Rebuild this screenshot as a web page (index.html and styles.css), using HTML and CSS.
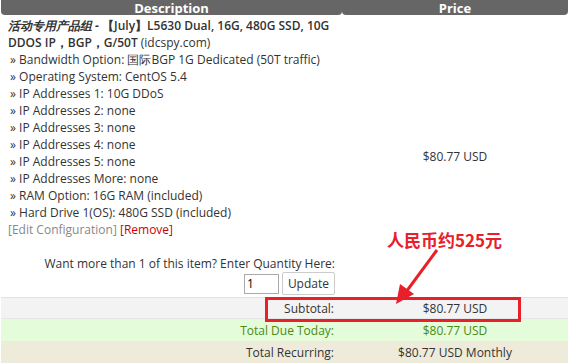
FILE: index.html
```html
<!DOCTYPE html>
<html lang="en">
<head>
  <meta charset="UTF-8" />
  <title>Shopping Cart</title>
  <link rel="stylesheet" href="styles.css">
</head>
<body>
  <table class="cart">
    <thead>
      <tr>
        <th class="col-desc">Description</th>
        <th class="col-price">Price</th>
      </tr>
    </thead>
    <tbody>
      <tr class="item">
        <td class="desc">
          <div class="title"><em>活动专用产品组 -</em> <strong>【July】L5630 Dual, 16G, 480G SSD, 10G DDOS IP，BGP，G/50T</strong> (idcspy.com)</div>
          <div class="opt">» Bandwidth Option: 国际BGP 1G Dedicated (50T traffic)</div>
          <div class="opt">» Operating System: CentOS 5.4</div>
          <div class="opt">» IP Addresses 1: 10G DDoS</div>
          <div class="opt">» IP Addresses 2: none</div>
          <div class="opt">» IP Addresses 3: none</div>
          <div class="opt">» IP Addresses 4: none</div>
          <div class="opt">» IP Addresses 5: none</div>
          <div class="opt">» IP Addresses More: none</div>
          <div class="opt">» RAM Option: 16G RAM (included)</div>
          <div class="opt">» Hard Drive 1(OS): 480G SSD (included)</div>
          <div class="links"><a href="#" class="edit">[Edit Configuration]</a> <a href="#" class="remove">[Remove]</a></div>
        </td>
        <td class="price" rowspan="2">$80.77 USD</td>
      </tr>
      <tr class="qty-row">
        <td class="qty">
          <div>Want more than 1 of this item? Enter Quantity Here:</div>
          <div class="qty-form"><input type="text" value="1" /><button>Update</button></div>
        </td>
      </tr>
      <tr class="subtotal">
        <td class="label">Subtotal:</td>
        <td class="amount">$80.77 USD</td>
      </tr>
      <tr class="due">
        <td class="label">Total Due Today:</td>
        <td class="amount">$80.77 USD</td>
      </tr>
      <tr class="recurring">
        <td class="label">Total Recurring:</td>
        <td class="amount">$80.77 USD Monthly</td>
      </tr>
    </tbody>
  </table>

  <!-- annotation drawn over the screenshot -->
  <div class="mark-box"></div>
  <div class="mark-text">人民币约525元</div>
  <svg class="mark-arrow" width="60" height="60" viewBox="0 0 60 60">
    <line x1="45" y1="2" x2="14" y2="44" stroke="#e8202a" stroke-width="3" />
    <polygon points="4,56 8,36 22,46" fill="#e8202a" />
  </svg>
</body>
</html>
```

FILE: styles.css
```css
* {
  box-sizing: border-box;
}

body {
  margin: 0;
  font-family: 'Open Sans', sans-serif;
  font-size: 12px;
  color: #333;
  background: #fff;
  position: relative;
}

.cart {
  width: 567px;
  margin-left: 1px;
  border-collapse: separate;
  border-spacing: 0;
}

.cart th {
  background: #666;
  color: #fff;
  font-size: 13px;
  font-weight: bold;
  height: 15px;
  line-height: 12px;
  padding: 0;
  border-radius: 0 0 4px 4px;
}

.cart .col-desc {
  width: 341px;
}

.cart td {
  padding: 0;
}

.desc {
  padding: 2px 0 2px 7px !important;
  line-height: 17px;
}

.title em {
  font-weight: bold;
}

.title strong {
  font-weight: 600;
}

.opt {
  padding-left: 2px;
}

.links a {
  text-decoration: none;
}

.links .edit {
  color: #888;
}

.links .remove {
  color: #cc0000;
}

.price {
  text-align: center;
  vertical-align: middle;
}

.qty {
  text-align: right;
  padding: 15px 7px 2px 0 !important;
  line-height: 17px;
}

.qty-form {
  display: flex;
  justify-content: flex-end;
  align-items: center;
  gap: 3px;
}

.qty-form input {
  width: 35px;
  height: 20px;
  border: 1px solid #aaa;
  font-family: 'Open Sans', sans-serif;
  font-size: 12px;
  padding: 0 2px;
}

.qty-form button {
  height: 23px;
  padding: 0 5px;
  background: #fff;
  border: 1px solid #ccc;
  border-radius: 2px;
  font-family: 'Open Sans', sans-serif;
  font-size: 12px;
  color: #333;
}

.subtotal td,
.due td,
.recurring td {
  height: 22px;
}

.label {
  text-align: right;
  padding-right: 8px !important;
}

.amount {
  text-align: center;
}

.subtotal td {
  background: #f3f3f3;
  border-top: 1px solid #e2e2e2;
  border-bottom: 1px solid #e6e6e6;
}

.due td {
  background: #e5fcdb;
  color: #4a8a12;
}

.recurring td {
  background: #efebda;
}

.mark-box {
  position: absolute;
  left: 265px;
  top: 297px;
  width: 256px;
  height: 25px;
  border: 3px solid #e8202a;
}

.mark-text {
  position: absolute;
  left: 387px;
  top: 229px;
  color: #e8202a;
  font-family: 'Noto Sans CJK SC', sans-serif;
  font-weight: bold;
  font-size: 17px;
  line-height: 22px;
}

.mark-arrow {
  position: absolute;
  left: 392px;
  top: 248px;
}
```
